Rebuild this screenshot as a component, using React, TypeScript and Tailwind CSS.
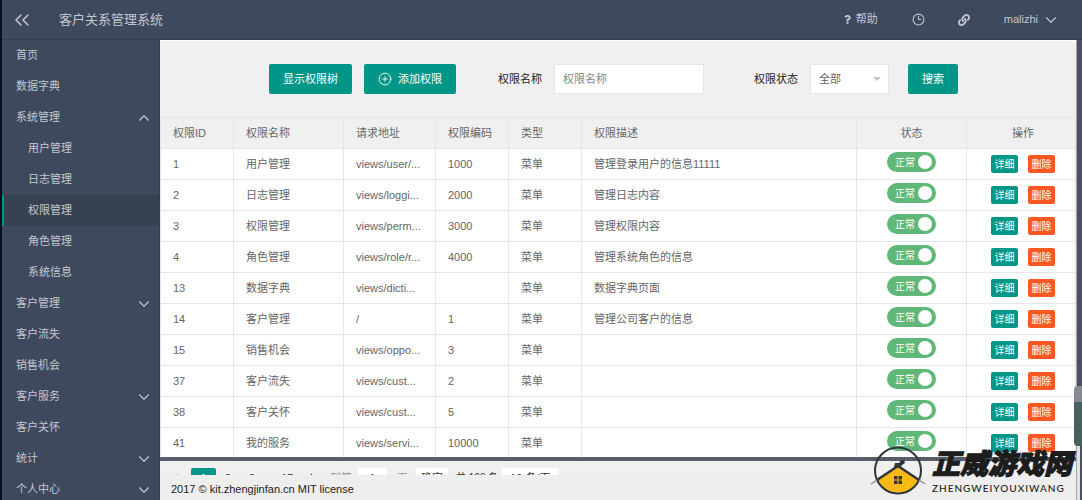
import { ChevronDown, ChevronLeft, ChevronRight, ChevronsLeft, ChevronUp, CirclePlus, Clock3 } from "lucide-react";
import { FaLink, FaQuestion } from "react-icons/fa";

type MenuItem = {
  label: string;
  child?: boolean;
  active?: boolean;
  arrow?: "up" | "down";
};

const menu: MenuItem[] = [
  { label: "首页" },
  { label: "数据字典" },
  { label: "系统管理", arrow: "up" },
  { label: "用户管理", child: true },
  { label: "日志管理", child: true },
  { label: "权限管理", child: true, active: true },
  { label: "角色管理", child: true },
  { label: "系统信息", child: true },
  { label: "客户管理", arrow: "down" },
  { label: "客户流失" },
  { label: "销售机会" },
  { label: "客户服务", arrow: "down" },
  { label: "客户关怀" },
  { label: "统计", arrow: "down" },
  { label: "个人中心", arrow: "down" },
];

const rows = [
  { id: 1, name: "用户管理", url: "views/user/...", code: "1000", desc: "管理登录用户的信息11111" },
  { id: 2, name: "日志管理", url: "views/loggi...", code: "2000", desc: "管理日志内容" },
  { id: 3, name: "权限管理", url: "views/perm...", code: "3000", desc: "管理权限内容" },
  { id: 4, name: "角色管理", url: "views/role/r...", code: "4000", desc: "管理系统角色的信息" },
  { id: 13, name: "数据字典", url: "views/dicti...", code: "", desc: "数据字典页面" },
  { id: 14, name: "客户管理", url: "/", code: "1", desc: "管理公司客户的信息" },
  { id: 15, name: "销售机会", url: "views/oppo...", code: "3", desc: "" },
  { id: 37, name: "客户流失", url: "views/cust...", code: "2", desc: "" },
  { id: 38, name: "客户关怀", url: "views/cust...", code: "5", desc: "" },
  { id: 41, name: "我的服务", url: "views/servi...", code: "10000", desc: "" },
];

export default function App() {
  return (
    <div className="relative flex h-screen flex-col overflow-hidden border-l-2 border-[#0a1119] bg-[#3e495e] font-['Liberation_Sans','Noto_Sans_CJK_SC',sans-serif] text-[11px] text-[#666]">
      <Header />
      <div className="flex min-h-0 flex-1">
        <Sidebar />
        <main className="flex min-w-0 flex-1 flex-col bg-[#f0f0f0]">
          <SearchBar />
          <PermissionTable />
          <Pager />
          <footer className="h-[25px] shrink-0 bg-[#eee] px-[11px] leading-[28px] text-[#222]">
            2017 © kit.zhengjinfan.cn MIT license
          </footer>
        </main>
        <div className="flex w-1.5 shrink-0 flex-col border-l border-[#a3a7b0] bg-[#4b5162]">
          <div className="mt-[346px] -ml-[3px] h-[60px] rounded-l border-t-[16px] border-[#858a93] bg-[#47605f]" />
          <div className="mr-0.5 flex-1 bg-[#e2e2e2]" />
        </div>
      </div>
      <Watermark />
    </div>
  );
}

function Header() {
  return (
    <header className="flex h-10 shrink-0 items-center border-b border-[#353e50] pr-[22px] text-[#c3c8d0]">
      <button type="button" aria-label="收起菜单" className="ml-2">
        <ChevronsLeft size={24} strokeWidth={1.5} />
      </button>
      <h1 className="ml-[25px] text-[13px]">客户关系管理系统</h1>
      <nav className="ml-auto flex items-center">
        <a href="#help" className="flex items-center gap-1">
          <FaQuestion size={9} />
          帮助
        </a>
        <a href="#history" aria-label="历史" className="ml-[34px]">
          <Clock3 size={13} strokeWidth={2} />
        </a>
        <a href="#link" aria-label="链接" className="ml-[33px]">
          <FaLink size={12} />
        </a>
        <button type="button" className="ml-[34px] flex items-center gap-1">
          malizhi
          <ChevronDown size={18} strokeWidth={1.5} />
        </button>
      </nav>
    </header>
  );
}

function Sidebar() {
  return (
    <nav className="w-[158px] shrink-0 overflow-hidden border-r border-[#353e50] text-[#c3c8d0]">
      {menu.map((item) => (
        <a
          key={item.label}
          href="#menu"
          className={`flex h-[31px] items-center justify-between border-l-2 pr-1.5 ${
            item.child ? "pl-6" : "pl-3"
          } ${item.active ? "border-[#009688] bg-[#384152]" : "border-transparent"}`}
        >
          {item.label}
          {item.arrow === "up" && <ChevronUp size={18} strokeWidth={1.5} />}
          {item.arrow === "down" && <ChevronDown size={18} strokeWidth={1.5} />}
        </a>
      ))}
    </nav>
  );
}

function SearchBar() {
  return (
    <form className="flex h-[77px] shrink-0 items-center border-t border-white pl-[109px]">
      <button type="button" className="h-[30px] rounded-xs bg-[#009688] px-3.5 text-white">
        显示权限树
      </button>
      <button
        type="button"
        className="ml-3 flex h-[30px] items-center gap-1.5 rounded-xs bg-[#009688] px-3.5 text-white"
      >
        <CirclePlus size={14} strokeWidth={1.5} />
        添加权限
      </button>
      <label htmlFor="name" className="ml-[42px] text-[#222]">
        权限名称
      </label>
      <input
        id="name"
        type="text"
        placeholder="权限名称"
        className="ml-3 h-[30px] w-[150px] border border-[#e6e6e6] bg-white px-2 placeholder:text-[#858585]"
      />
      <label htmlFor="status" className="ml-[50px] text-[#222]">
        权限状态
      </label>
      <div className="relative ml-3">
        <select
          id="status"
          className="h-[30px] w-[79px] appearance-none border border-[#e6e6e6] bg-white px-2"
        >
          <option>全部</option>
        </select>
        <span className="pointer-events-none absolute top-[13px] right-2 border-x-4 border-t-4 border-x-transparent border-t-[#c2c2c2]" />
      </div>
      <button type="submit" className="ml-[19px] h-[30px] rounded-xs bg-[#009688] px-3.5 text-white">
        搜索
      </button>
    </form>
  );
}

function PermissionTable() {
  return (
    <div className="min-h-0 flex-1 overflow-hidden border-b-4 border-[#585e69]">
      <table className="w-full table-fixed border-collapse text-left whitespace-nowrap [&_td]:border [&_td]:border-[#e6e6e6] [&_td]:px-3 [&_th]:border [&_th]:border-[#e6e6e6] [&_th]:px-3 [&_th]:font-normal">
        <colgroup>
          <col className="w-[73px]" />
          <col className="w-[110px]" />
          <col className="w-[92px]" />
          <col className="w-[73px]" />
          <col className="w-[73px]" />
          <col />
          <col className="w-[110px]" />
          <col className="w-[109px]" />
        </colgroup>
        <thead>
          <tr className="h-[31px]">
            <th>权限ID</th>
            <th>权限名称</th>
            <th>请求地址</th>
            <th>权限编码</th>
            <th>类型</th>
            <th>权限描述</th>
            <th className="text-center">状态</th>
            <th className="text-center">
              <span className="pl-1">操作</span>
            </th>
          </tr>
        </thead>
        <tbody className="bg-white">
          {rows.map((row) => (
            <tr key={row.id} className="h-[31px]">
              <td>{row.id}</td>
              <td>{row.name}</td>
              <td>{row.url}</td>
              <td>{row.code}</td>
              <td>菜单</td>
              <td>{row.desc}</td>
              <td>
                <StatusSwitch />
              </td>
              <td>
                <div className="flex justify-center gap-2.5 pl-1 text-[10px] text-white">
                  <button type="button" className="h-[18px] w-[27px] rounded-xs bg-[#009688]">
                    详细
                  </button>
                  <button type="button" className="h-[18px] w-[27px] rounded-xs bg-[#ff5722]">
                    删除
                  </button>
                </div>
              </td>
            </tr>
          ))}
        </tbody>
      </table>
    </div>
  );
}

function StatusSwitch() {
  return (
    <label className="mx-auto mb-1 flex h-5 w-[49px] items-center justify-between rounded-full bg-[#5fb878] pr-1 pl-2 text-[10px] text-white">
      正常
      <input
        type="checkbox"
        role="switch"
        defaultChecked
        className="size-3.5 appearance-none rounded-full bg-white"
      />
    </label>
  );
}

function Pager() {
  return (
    <div className="flex h-3.5 shrink-0 items-start overflow-hidden pt-[7px] pl-2 leading-5 text-[#333]">
      <a href="#prev" aria-label="上一页" className="w-[23px] pt-0.5 text-[#bbb]">
        <ChevronLeft size={16} strokeWidth={1.5} />
      </a>
      <a href="#1" className="w-[25px] rounded-t-xs bg-[#009688] text-center text-white">1</a>
      <a href="#2" className="w-6 text-center">2</a>
      <a href="#3" className="w-6 text-center">3</a>
      <span className="w-[11px] text-center">…</span>
      <a href="#17" className="w-6 text-center">17</a>
      <a href="#next" aria-label="下一页" className="w-[31px] pt-0.5 pl-1.5">
        <ChevronRight size={16} strokeWidth={1.5} />
      </a>
      <label htmlFor="page" className="text-[#999]">到第</label>
      <input id="page" type="text" defaultValue="1" className="ml-1.5 h-5 w-[29px] bg-white text-center" />
      <span className="ml-2.5 text-[#999]">页</span>
      <button type="button" className="ml-2 h-5 w-8 bg-white">确定</button>
      <span className="ml-2 text-[10px]">共 163 条</span>
      <select aria-label="每页条数" className="ml-1 h-5 w-[57px] appearance-none bg-white px-2">
        <option>10 条/页</option>
      </select>
    </div>
  );
}

function Watermark() {
  return (
    <div className="pointer-events-none absolute right-2.5 bottom-1 flex items-center gap-1.5 text-[#1c1c1c]">
      <svg width="56" height="50" viewBox="0 0 56 50" fill="none">
        <path d="M7.5 34 28 20 48.500 34A23 23 0 0 1 7.500 34Z" fill="#fdb913" />
        <circle cx="28" cy="24.500" r="23" stroke="#30343c" strokeWidth="2" />
        <path d="M7 34 28 20 49 34" stroke="#30343c" strokeWidth="2.500" />
        <path d="M7 34 1 38M49 34 55 38" stroke="#8b8f98" strokeWidth="1.500" />
        <path d="M24 21 25 17 29 17 31 14 34 14 35 17 32 19 30 22Z" fill="#30343c" />
        <path d="M24 30h3.500v3.500H24zM28.500 30H32v3.500h-3.500zM24 34.500h3.500V38H24zM28.500 34.500H32V38h-3.500z" fill="#30343c" />
      </svg>
      <div>
        <div className="text-[28px] leading-[34px] font-black italic [-webkit-text-stroke:1px_#1c1c1c]">
          正威游戏网
        </div>
        <div className="font-['Lato',sans-serif] text-[10px] leading-3 font-medium tracking-widest">
          ZHENGWEIYOUXIWANG
        </div>
      </div>
    </div>
  );
}
